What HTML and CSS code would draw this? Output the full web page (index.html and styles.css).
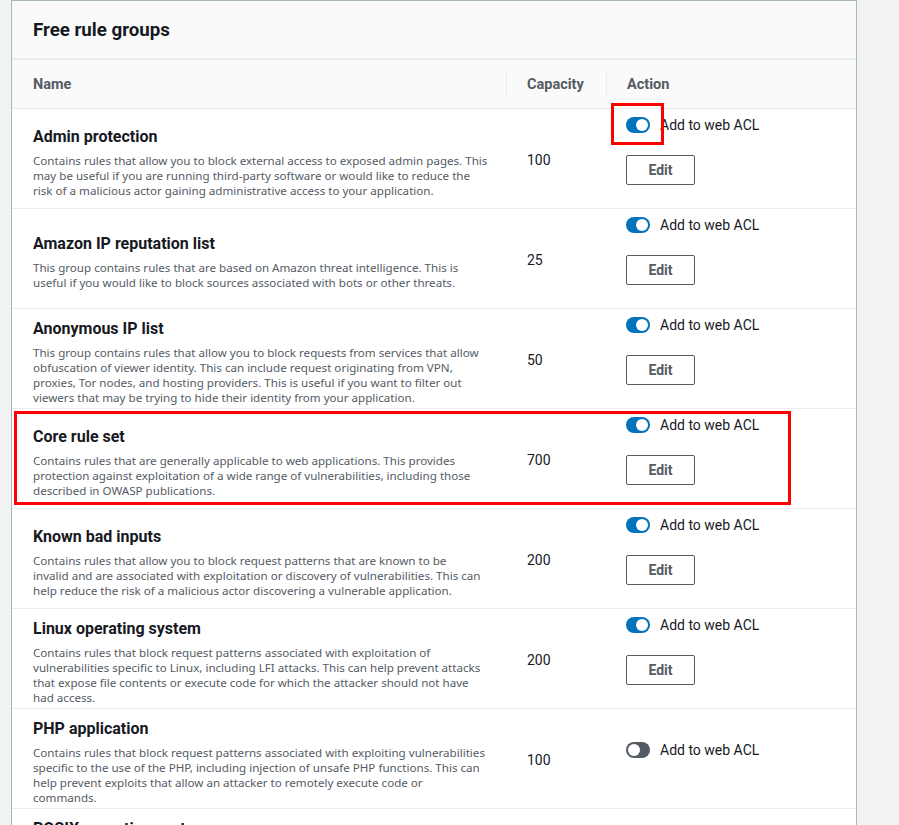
FILE: index.html
```html
<!DOCTYPE html>
<html lang="en">
<head>
<meta charset="utf-8">
<title>Free rule groups</title>
<link rel="stylesheet" href="styles.css">
</head>
<body>
<div class="panel">
  <div class="panel-header"><h2 class="panel-title">Free rule groups</h2></div>
  <div class="table">
    <div class="thead">
      <div class="th th-name">Name</div>
      <div class="th th-cap">Capacity</div>
      <div class="th th-action">Action</div>
    </div>

    <div class="row">
      <div class="cell-name">
        <div class="rule-title">Admin protection</div>
        <p class="rule-desc">Contains rules that allow you to block external access to exposed admin pages. This<br>may be useful if you are running third-party software or would like to reduce the<br>risk of a malicious actor gaining administrative access to your application.</p>
      </div>
      <div class="cell-cap">100</div>
      <div class="cell-action">
        <label class="toggle-line"><span class="toggle on"></span><span class="toggle-label">Add to web ACL</span></label>
        <button class="btn">Edit</button>
      </div>
      <div class="mark mark-toggle"></div>
    </div>

    <div class="row">
      <div class="cell-name">
        <div class="rule-title">Amazon IP reputation list</div>
        <p class="rule-desc">This group contains rules that are based on Amazon threat intelligence. This is<br>useful if you would like to block sources associated with bots or other threats.</p>
      </div>
      <div class="cell-cap">25</div>
      <div class="cell-action">
        <label class="toggle-line"><span class="toggle on"></span><span class="toggle-label">Add to web ACL</span></label>
        <button class="btn">Edit</button>
      </div>
    </div>

    <div class="row">
      <div class="cell-name">
        <div class="rule-title">Anonymous IP list</div>
        <p class="rule-desc">This group contains rules that allow you to block requests from services that allow<br>obfuscation of viewer identity. This can include request originating from VPN,<br>proxies, Tor nodes, and hosting providers. This is useful if you want to filter out<br>viewers that may be trying to hide their identity from your application.</p>
      </div>
      <div class="cell-cap">50</div>
      <div class="cell-action">
        <label class="toggle-line"><span class="toggle on"></span><span class="toggle-label">Add to web ACL</span></label>
        <button class="btn">Edit</button>
      </div>
    </div>

    <div class="row">
      <div class="cell-name">
        <div class="rule-title">Core rule set</div>
        <p class="rule-desc">Contains rules that are generally applicable to web applications. This provides<br>protection against exploitation of a wide range of vulnerabilities, including those<br>described in OWASP publications.</p>
      </div>
      <div class="cell-cap">700</div>
      <div class="cell-action">
        <label class="toggle-line"><span class="toggle on"></span><span class="toggle-label">Add to web ACL</span></label>
        <button class="btn">Edit</button>
      </div>
      <div class="mark mark-row"></div>
    </div>

    <div class="row">
      <div class="cell-name">
        <div class="rule-title">Known bad inputs</div>
        <p class="rule-desc">Contains rules that allow you to block request patterns that are known to be<br>invalid and are associated with exploitation or discovery of vulnerabilities. This can<br>help reduce the risk of a malicious actor discovering a vulnerable application.</p>
      </div>
      <div class="cell-cap">200</div>
      <div class="cell-action">
        <label class="toggle-line"><span class="toggle on"></span><span class="toggle-label">Add to web ACL</span></label>
        <button class="btn">Edit</button>
      </div>
    </div>

    <div class="row">
      <div class="cell-name">
        <div class="rule-title">Linux operating system</div>
        <p class="rule-desc">Contains rules that block request patterns associated with exploitation of<br>vulnerabilities specific to Linux, including LFI attacks. This can help prevent attacks<br>that expose file contents or execute code for which the attacker should not have<br>had access.</p>
      </div>
      <div class="cell-cap">200</div>
      <div class="cell-action">
        <label class="toggle-line"><span class="toggle on"></span><span class="toggle-label">Add to web ACL</span></label>
        <button class="btn">Edit</button>
      </div>
    </div>

    <div class="row">
      <div class="cell-name">
        <div class="rule-title">PHP application</div>
        <p class="rule-desc">Contains rules that block request patterns associated with exploiting vulnerabilities<br>specific to the use of the PHP, including injection of unsafe PHP functions. This can<br>help prevent exploits that allow an attacker to remotely execute code or<br>commands.</p>
      </div>
      <div class="cell-cap">100</div>
      <div class="cell-action">
        <label class="toggle-line"><span class="toggle"></span><span class="toggle-label">Add to web ACL</span></label>
      </div>
    </div>

    <div class="row">
      <div class="cell-name">
        <div class="rule-title">POSIX operating system</div>
        <p class="rule-desc">Contains rules that block request patterns associated with exploiting vulnerabilities<br>specific to POSIX and POSIX-like operating systems, including LFI attacks. This can<br>help prevent attacks that expose file contents or execute code for which the attacker<br>should not have had access.</p>
      </div>
      <div class="cell-cap">100</div>
      <div class="cell-action">
        <label class="toggle-line"><span class="toggle"></span><span class="toggle-label">Add to web ACL</span></label>
      </div>
    </div>
  </div>
</div>
</body>
</html>
```
FILE: styles.css
```css
* { box-sizing: border-box; }
html, body { margin: 0; padding: 0; }
body {
  background: #f2f3f3;
  font-family: Roboto, "Liberation Sans", Arial, sans-serif;
  color: #16191f;
  overflow: hidden;
}
.panel {
  margin-left: 11px;
  width: 846px;
  background: #fff;
  border: 1px solid #aab7b8;
  border-bottom: none;
}
.panel-header {
  background: #fafafa;
  height: 59px;
  border-bottom: 2px solid #eaeded;
  display: flex;
  align-items: center;
  padding: 0 21px;
}
.panel-title {
  margin: 0;
  font-size: 18.7px;
  font-weight: 700;
  line-height: 22px;
}
.table { display: flex; flex-direction: column; }
.thead, .row {
  display: grid;
  grid-template-columns: 494px 100px 1fr;
}
.thead {
  height: 49px;
  background: #fafafa;
  border-bottom: 1px solid #eaeded;
  align-items: center;
}
.th {
  font-size: 14.5px;
  font-weight: 700;
  color: #545b64;
  padding-left: 21px;
  padding-top: 2px;
  line-height: 22px;
  border-left: 1px solid #eaeded;
}
.th-name { border-left: none; }
.th-cap, .th-action { padding-left: 20px; }
.row {
  position: relative;
  height: 100px;
  border-bottom: 1px solid #eaeded;
  align-items: center;
}
.cell-name { padding: 7px 4px 0 21px; }
.rule-title {
  font-size: 16px;
  font-weight: 700;
  line-height: 20px;
  margin-bottom: 6px;
}
.rule-desc {
  margin: 0;
  font-family: "Noto Sans", "Open Sans", sans-serif;
  font-size: 11.6px;
  line-height: 15px;
  color: #545b64;
  white-space: nowrap;
}
.cell-cap {
  font-size: 14px;
  padding-left: 21px;
  padding-top: 2px;
}
.cell-action {
  padding-left: 20px;
  padding-bottom: 18px;
  display: flex;
  flex-direction: column;
  align-items: flex-start;
  gap: 20px;
}
.toggle-line {
  display: flex;
  align-items: center;
  gap: 10px;
  height: 20px;
  font-size: 14px;
}
.toggle {
  width: 24px;
  height: 16px;
  border-radius: 8px;
  background: #545b64;
  position: relative;
  flex: none;
}
.toggle::after {
  content: "";
  position: absolute;
  top: 2px;
  left: 2px;
  width: 12px;
  height: 12px;
  border-radius: 50%;
  background: #fff;
}
.toggle.on { background: #0073bb; }
.toggle.on::after { left: 10px; }
.btn {
  width: 69px;
  height: 30px;
  background: #fff;
  border: 1px solid #545b64;
  border-radius: 2px;
  font-family: inherit;
  font-size: 14px;
  font-weight: 700;
  color: #545b64;
  padding: 0;
}
.mark {
  position: absolute;
  border: 3px solid #ff0000;
  pointer-events: none;
}
.mark-toggle {
  left: 599px;
  top: -6px;
  width: 53px;
  height: 42px;
}
.mark-row {
  left: 2px;
  top: 2px;
  width: 777px;
  height: 94px;
}
```
